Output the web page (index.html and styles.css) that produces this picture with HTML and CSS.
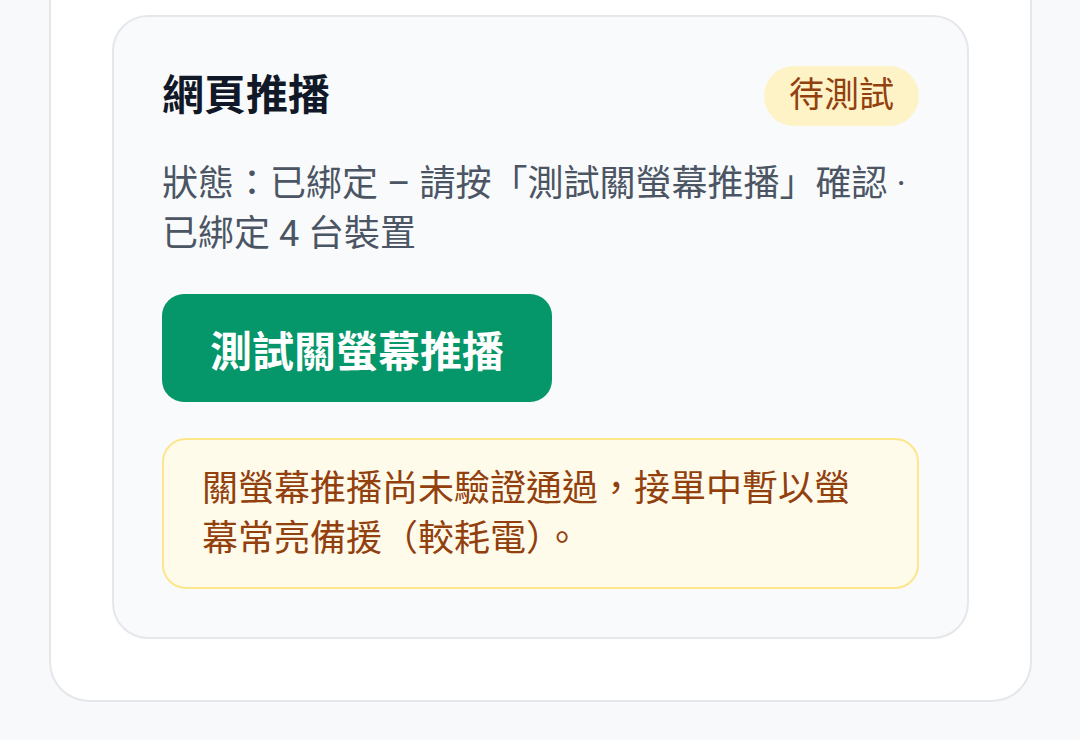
FILE: index.html
```html
<!DOCTYPE html>
<html>
<head>
    <meta charset="utf-8">
    <title>網頁推播</title>
    <link rel="stylesheet" href="styles.css">
</head>
<body>
    <div class="panel">
        <div class="push-card">
            <div class="push-head">
                <h2>網頁推播</h2>
                <span class="badge">待測試</span>
            </div>

            <p class="status">狀態：已綁定 – 請按「測試關螢幕推播」確認 · 已綁定 4 台裝置</p>

            <button class="test-btn">測試關螢幕推播</button>

            <div class="notice">關螢幕推播尚未驗證通過，接單中暫以螢幕常亮備援（較耗電）。</div>
        </div>
    </div>
</body>
</html>
```

FILE: styles.css
```css
body {
    margin: 0;
    padding: 0 48px 38px 49px;
    background: #f8f9fb;
    font-family: Roboto, "Noto Sans CJK TC", sans-serif;
}
.panel {
    background: #fff;
    border: 2px solid #e5e7eb;
    border-top: 0;
    border-radius: 0 0 40px 40px;
    padding: 15px 61px 61px;
}
.push-card {
    background: #f8fafc;
    border: 2px solid #e5e7eb;
    border-radius: 36px;
    padding: 49px 48px 48px;
}
.push-head {
    display: flex;
    justify-content: space-between;
    align-items: center;
}
.push-head h2 {
    margin: 0;
    font-size: 42px;
    font-weight: 700;
    color: #111827;
    line-height: 60px;
}
.badge {
    background: #fef3c7;
    color: #92400e;
    font-size: 35px;
    line-height: 60px;
    padding: 0 25px;
    border-radius: 30px;
}
.status {
    margin: 33px 0 0;
    font-size: 36px;
    line-height: 50px;
    color: #4b5563;
}
.test-btn {
    display: block;
    margin-top: 35px;
    height: 108px;
    padding: 0 48px;
    border: none;
    border-radius: 22px;
    background: #059669;
    color: #fff;
    font-family: inherit;
    font-size: 42px;
    font-weight: 700;
}
.notice {
    margin-top: 36px;
    padding: 24px 38px 23px;
    background: #fffbeb;
    border: 2px solid #fde68a;
    border-radius: 24px;
    color: #92400e;
    font-size: 36px;
    line-height: 50px;
}
```
